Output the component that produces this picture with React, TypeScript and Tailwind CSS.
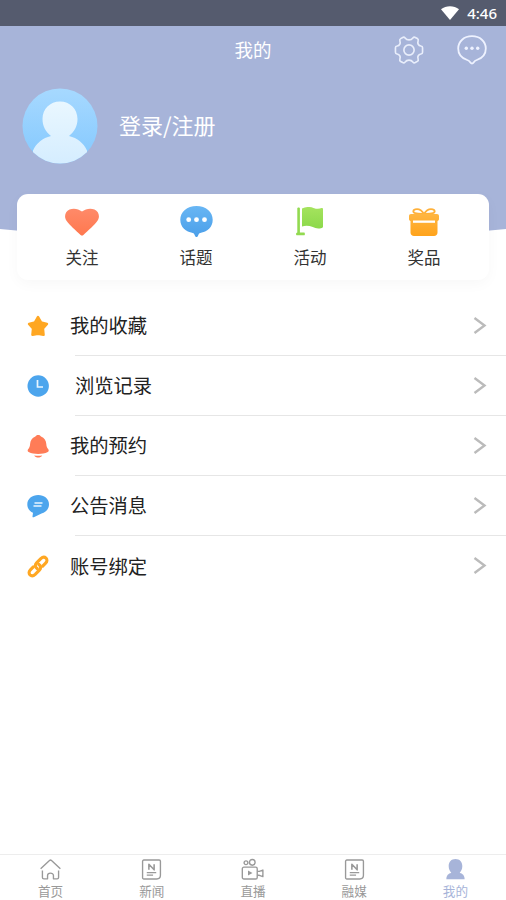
import type { ReactNode } from "react";

type Shortcut = { label: string; icon: ReactNode };
type MenuItem = { label: string; icon: ReactNode; indent?: boolean };
type Tab = { label: string; icon: ReactNode; active?: boolean };

const shortcuts: Shortcut[] = [
  {
    label: "关注",
    icon: (
      <svg width="34" height="28" viewBox="0 0 34 28">
        <defs>
          <linearGradient id="heart" x1="0" y1="0" x2="0" y2="1">
            <stop offset="0" stopColor="#ff8a69" />
            <stop offset="1" stopColor="#ff784f" />
          </linearGradient>
        </defs>
        <path
          d="M17 3.500C13.500.7 8.500-.2 4.500 1.500 0 3.500-1.200 9 1.500 12.800 4 16.500 11 22.800 15.600 27c.8.8 2 .8 2.800 0C23 22.800 30 16.500 32.500 12.800 35.200 9 34 3.500 29.500 1.500 25.500-.2 20.500.7 17 3.500Z"
          fill="url(#heart)"
        />
      </svg>
    ),
  },
  {
    label: "话题",
    icon: (
      <svg width="33" height="31" viewBox="0 0 33 31">
        <defs>
          <linearGradient id="topic" x1="0" y1="0" x2="0" y2="1">
            <stop offset="0" stopColor="#68b6f4" />
            <stop offset="1" stopColor="#4b9fe9" />
          </linearGradient>
        </defs>
        <path
          d="M16.500 0C26 0 32.700 6 32.700 13.800c0 7.500-5.500 12-12.500 13.200-1 .2-1.600 1-2.200 2.800-.5 1.600-2.500 1.600-3 0-.6-1.800-1.200-2.600-2.200-2.800C5.800 25.800.3 21.300.3 13.800.3 6 7 0 16.500 0Z"
          fill="url(#topic)"
        />
        <circle cx="8.700" cy="13.700" r="2.400" fill="#fff" />
        <circle cx="16.500" cy="13.700" r="2.400" fill="#fff" />
        <circle cx="24.500" cy="13.700" r="2.400" fill="#fff" />
      </svg>
    ),
  },
  {
    label: "活动",
    icon: (
      <svg width="27" height="29" viewBox="0 0 27 29" className="-ml-[2px]">
        <defs>
          <linearGradient id="flag" x1="0" y1="0" x2="0" y2="1">
            <stop offset="0" stopColor="#a5e35e" />
            <stop offset="1" stopColor="#8cd94b" />
          </linearGradient>
        </defs>
        <path
          d="M1.300 1.200C1.300.2 3.900.2 3.900 1.200v24.300H8c1.200 0 1.200 2.800 0 2.800H1c-1.300 0-1.300-2.800.3-2.800Z"
          fill="#92da50"
        />
        <path
          d="M6 1.500C10.500-.7 14.500-.2 17.500.9c3.500 1.300 6 .9 8 .2.900-.3 1.500 0 1.500.9v17.500c0 .8-.5 1.200-1.200 1.400-3.600 1.200-6.400.4-9-.8-4-1.600-7.800-1.500-10.800-.5Z"
          fill="url(#flag)"
        />
      </svg>
    ),
  },
  {
    label: "奖品",
    icon: (
      <svg width="30" height="28" viewBox="0 0 30 28">
        <defs>
          <linearGradient id="gift" x1="0" y1="0" x2="0" y2="1">
            <stop offset="0" stopColor="#ffb642" />
            <stop offset="1" stopColor="#ffa31b" />
          </linearGradient>
        </defs>
        <path
          d="M15 6C12 1.200 8.500.8 6.200 1.400 3.600 2.100 3.800 4.500 6 5.200 9 6.200 12 6 15 6Zm0 0C18 1.200 21.500.8 23.800 1.400c2.600.7 2.400 3.100.2 3.800-3 1-6 .8-9 .8Z"
          fill="none"
          stroke="#ffb13a"
          strokeWidth="1.900"
        />
        <path
          d="M2 6h26c1.200 0 2 .8 2 2v3c0 1-.6 1.700-1.500 2v11.500c0 2-1.500 3.500-3.500 3.500H5c-2 0-3.500-1.500-3.500-3.500V13C.6 12.700 0 12 0 11V8c0-1.200.8-2 2-2Z"
          fill="url(#gift)"
        />
        <path d="M4 12.500h22v2.300H4Z" fill="#fff" />
      </svg>
    ),
  },
];

const menuItems: MenuItem[] = [
  {
    label: "我的收藏",
    icon: (
      <path
        d="m11 2.200 3 5.300 5.900 1.400-4 4.600.6 6.300-5.500-1.100-5.500 1.100.6-6.300-4-4.600L8 7.500Z"
        fill="#ffa722"
        stroke="#ffa722"
        strokeWidth="2.600"
        strokeLinejoin="round"
      />
    ),
  },
  {
    label: "浏览记录",
    indent: true,
    icon: (
      <>
        <circle cx="11.200" cy="11" r="10.700" fill="#4ca5ed" />
        <path d="M10.500 5v7h5.500" fill="none" stroke="#e8f5ff" strokeWidth="1.700" />
      </>
    ),
  },
  {
    label: "我的预约",
    icon: (
      <>
        <path
          d="M11.200 0c1.500 0 2.300.6 2.800 1.600 3.500 1.300 5 4.200 5.300 7.400.3 2.600.4 3.200 2 5.200.7 1 .6 2.200-.5 2.900-2.800 1.500-6 1.900-9.600 1.900s-6.800-.4-9.600-1.900c-1.100-.7-1.200-1.900-.5-2.900 1.600-2 1.700-2.600 2-5.200.3-3.200 1.800-6.100 5.300-7.400C8.900.6 9.700 0 11.200 0Z"
          fill="#ff7c57"
        />
        <path d="M7.200 20.500c2.600.4 5.400.4 8 0-.8 1.500-2.500 2-4 2s-3.200-.5-4-2Z" fill="#ff7c57" />
      </>
    ),
  },
  {
    label: "公告消息",
    icon: (
      <>
        <path
          d="M11.200 0C17.200 0 22 3.800 22 9.300c0 5-3.500 8-7.500 9.300l-7.700 3.600c-.9.300-1.400 0-1.300-.7l.5-3.700C2.500 16.200.3 13.300.3 9.300.3 3.800 5.200 0 11.200 0Z"
          fill="#4ca5ed"
        />
        <path d="M7.500 8h8M6.500 11h8" stroke="#e8f5ff" strokeWidth="1.500" />
      </>
    ),
  },
  {
    label: "账号绑定",
    icon: (
      <g fill="none" stroke="#ffa722" strokeWidth="3.100" strokeLinecap="round">
        <path d="M10.200 13.600c-2.200-1.500-2.400-4-.6-5.800l4.200-4.200c1.700-1.600 3.900-1.700 5.200-.5 1.300 1.300 1.200 3.500-.4 5.100l-2.900 2.900" />
        <path d="M11.800 9.400c2.200 1.500 2.400 4 .6 5.800l-4.200 4.200c-1.700 1.600-3.900 1.700-5.200.5-1.300-1.300-1.200-3.500.4-5.100l2.900-2.900" />
      </g>
    ),
  },
];

const newsIcon = (
  <>
    <path d="M2.700 1h14.600c.8 0 1.200.5 1.200 1.200v13.300c0 2.300-1.200 3.500-3.500 3.500H2.700c-.7 0-1.200-.5-1.200-1.200V2.200C1.500 1.500 2 1 2.700 1Z" />
    <path d="M7.500 10.300V5l5 5.300V5" strokeWidth="1.500" />
    <path d="M5.500 13h9M5.500 15.400h6" strokeWidth="1.100" />
  </>
);

const tabs: Tab[] = [
  {
    label: "首页",
    icon: (
      <path d="m.6 9.300L9.300 1.300q.7-.6 1.400 0L19.400 9.300M2.300 11v6.500c0 .9.500 1.400 1.400 1.400h3.500v-3.200c0-3 5.600-3 5.600 0v3.200h3.500c.9 0 1.400-.5 1.400-1.400V11" />
    ),
  },
  { label: "新闻", icon: newsIcon },
  {
    label: "直播",
    icon: (
      <>
        <circle cx="3.800" cy="3.600" r="1.800" />
        <circle cx="9.800" cy="3.200" r="2.700" />
        <rect x="0.300" y="7.800" width="14.200" height="11.200" rx="1.500" />
        <path d="M14.500 11.800h2l3.400-1.300v6.300l-3.400-1.300h-2" />
        <path d="m5.700 11 4.300 2.400-4.300 2.400Z" fill="currentColor" stroke="none" />
      </>
    ),
  },
  { label: "融媒", icon: newsIcon },
  {
    label: "我的",
    active: true,
    icon: (
      <path
        d="M10 0c4 0 6.500 2.700 6.500 6.700 0 3-1.200 5-2.500 6.300 2.700.9 4.700 2.300 4.700 6.200H1.300c0-3.900 2-5.300 4.700-6.200-1.300-1.300-2.500-3.300-2.500-6.300C3.500 2.700 6 0 10 0Z"
        fill="currentColor"
        stroke="none"
      />
    ),
  },
];

function StatusBar() {
  return (
    <div className="flex h-[26px] shrink-0 items-center justify-end bg-[#555b6e] pr-[9px] text-white">
      <svg width="18" height="14" viewBox="0 0 18 14" className="mr-[8px] mb-px">
        <path d="M0 3.200C5-.9 13-.9 18 3.200L9 14Z" fill="#fff" />
      </svg>
      <span className="font-['Noto_Sans'] text-[15px] leading-none font-medium">4:46</span>
    </div>
  );
}

function TitleBar() {
  return (
    <div className="grid h-[48px] grid-cols-3 items-center">
      <h1 className="col-start-2 text-center text-[18.500px] text-white">我的</h1>
      <div className="flex items-center justify-end gap-[33px] pr-[19px]">
        <svg
          width="30"
          height="30"
          viewBox="-0.500 -0.500 31 31"
          fill="none"
          stroke="#e9eefb"
          strokeWidth="1.700"
          strokeLinejoin="round"
        >
          <path d="M8.500 2c1-.5 1.800-.2 2.500.7C12.100 4.200 13.300 4.600 15 4.600s2.900-.4 4-1.900c.7-.9 1.500-1.200 2.500-.7l2.100 1.200c1 .6 1.200 1.500.8 2.600-.9 2.400.3 4.600 2.900 5.100 1.200.2 1.700.8 1.700 1.900v4.400c0 1.100-.5 1.700-1.700 1.900-2.600.5-3.800 2.700-2.900 5.100.4 1.100.2 2-.8 2.600L21.500 28c-1 .5-1.800.2-2.500-.7-1.100-1.500-2.300-1.900-4-1.900s-2.900.4-4 1.900c-.7.9-1.500 1.200-2.500.7l-2.100-1.200c-1-.6-1.200-1.500-.8-2.600.9-2.400-.3-4.600-2.900-5.100C1.500 18.900 1 18.300 1 17.200v-4.400c0-1.100.5-1.700 1.700-1.900 2.600-.5 3.800-2.700 2.900-5.100-.4-1.100-.2-2 .8-2.600Z" />
          <circle cx="15" cy="15" r="5.300" />
        </svg>
        <svg width="30" height="30" viewBox="0 0 30 30" fill="none" stroke="#eef2ff" strokeWidth="1.800">
          <path d="M15 1.200c8 0 13.800 5.300 13.800 12.300 0 6-3.800 9.800-9 11.500-1.500.5-2.200 1-3.200 2.500-.9 1.300-2.300 1.300-3.200 0-1-1.500-1.700-2-3.200-2.500-5.200-1.700-9-5.500-9-11.500C1.200 6.500 7 1.200 15 1.200Z" />
          <g fill="#eef2ff" stroke="none">
            <circle cx="9.300" cy="13.200" r="1.700" />
            <circle cx="15" cy="13.200" r="1.700" />
            <circle cx="20.700" cy="13.200" r="1.700" />
          </g>
        </svg>
      </div>
    </div>
  );
}

function Avatar() {
  return (
    <svg width="76" height="76" viewBox="0 0 76 76">
      <defs>
        <linearGradient id="avatarBg" x1="0" y1="0" x2="0" y2="1">
          <stop offset="0" stopColor="#a7d9ff" />
          <stop offset="1" stopColor="#83c8fe" />
        </linearGradient>
        <linearGradient id="avatarHead" x1="0" y1="0" x2="0" y2="1">
          <stop offset="0" stopColor="#e9f7ff" />
          <stop offset="1" stopColor="#d5edff" />
        </linearGradient>
        <clipPath id="avatarClip">
          <circle cx="38" cy="38" r="37.500" />
        </clipPath>
      </defs>
      <g clipPath="url(#avatarClip)">
        <rect width="76" height="76" fill="url(#avatarBg)" />
        <path
          d="M38 13.500c10 0 17.500 7.500 17.500 17.500 0 7-3 12.500-8.500 17 8.500 2 14.500 7 18 14.500V76H11V62.500c3.500-7.500 9.500-12.500 18-14.500-5.500-4.500-8.500-10-8.500-17 0-10 7.500-17.500 17.500-17.500Z"
          fill="url(#avatarHead)"
        />
      </g>
    </svg>
  );
}

export default function App() {
  return (
    <div className="flex h-[900px] w-[506px] flex-col overflow-hidden bg-white font-['Noto_Sans_CJK_SC',sans-serif]">
      <StatusBar />

      <header className="h-[168px] shrink-0 bg-[#a7b4d9]">
        <TitleBar />
        <div className="flex items-center gap-[21px] pt-[14px] pl-[22px]">
          <Avatar />
          <span className="mb-[3px] text-[22px] text-white">登录/注册</span>
        </div>
      </header>

      <section className="relative h-[86px] shrink-0 px-[17px]">
        <svg width="506" height="50" viewBox="0 0 506 50" className="absolute top-0 left-0">
          <path d="M0 0h506v35Q253 62 0 35Z" fill="#a7b4d9" />
        </svg>
        <div className="relative grid h-full grid-cols-4 rounded-[11px] bg-white px-[8px] shadow-[0_4px_14px_rgba(0,0,0,0.03)]">
          {shortcuts.map((item) => (
            <div key={item.label} className="flex flex-col items-center pt-[12px]">
              <div className="flex h-[31px] items-center">{item.icon}</div>
              <span className="mt-[8px] text-[16.500px] leading-6 text-[#333]">{item.label}</span>
            </div>
          ))}
        </div>
      </section>

      <ul className="mt-[16px]">
        {menuItems.map((item, i) => (
          <li key={item.label} className="flex h-[60px] pl-[27px]">
            <svg width="22" height="23" viewBox="0 0 22 23" className="mt-[19px] shrink-0">
              {item.icon}
            </svg>
            <div
              className={`ml-[26px] flex flex-1 items-center justify-between pr-[19px] ${
                i < menuItems.length - 1 ? "border-b border-[#e6e6e6]" : ""
              }`}
            >
              <span
                className={`text-[19.300px] text-[#222] ${item.indent ? "" : "-ml-[5px]"}`}
              >
                {item.label}
              </span>
              <svg width="14" height="18" viewBox="0 0 14 18" fill="none" stroke="#bbb" strokeWidth="2.400">
                <path d="m1.500 1 10 7.500-10 7.500" />
              </svg>
            </div>
          </li>
        ))}
      </ul>

      <nav className="mt-auto grid h-[46px] grid-cols-5 border-t border-[#ededed]">
        {tabs.map((tab) => (
          <div
            key={tab.label}
            className={`flex flex-col items-center pt-[4px] ${
              tab.active ? "text-[#a7b4d9]" : "text-[#999]"
            }`}
          >
            <svg
              width="21"
              height="21"
              viewBox="0 0 20 20"
              fill="none"
              stroke="currentColor"
              strokeWidth="1.300"
              strokeLinejoin="round"
              className="overflow-visible"
            >
              {tab.icon}
            </svg>
            <span className="mt-[2px] text-[12.600px] leading-[18px]">{tab.label}</span>
          </div>
        ))}
      </nav>
    </div>
  );
}
